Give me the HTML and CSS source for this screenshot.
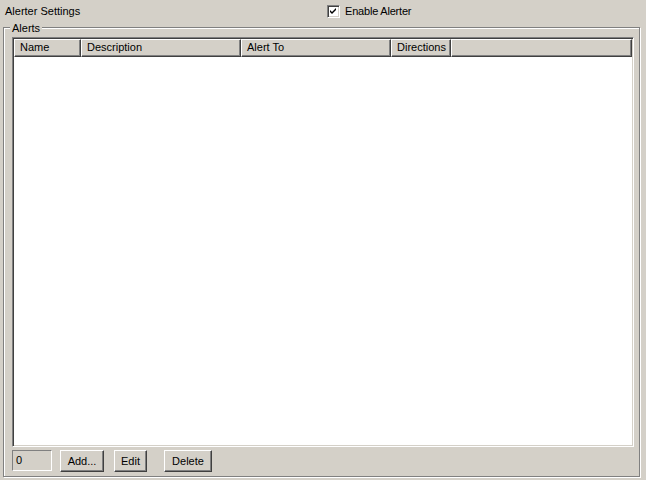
FILE: index.html
```html
<!DOCTYPE html>
<html lang="en">
<head>
    <meta charset="UTF-8">
    <title>Alerter Settings</title>
    <link rel="stylesheet" href="styles.css">
</head>
<body>
    <!-- Top bar -->
    <div class="top-bar">
        <span class="page-title">Alerter Settings</span>
        <label class="check">
            <span class="check-box">
                <svg width="9" height="9" viewBox="0 0 9 9">
                    <path d="M1 3 L3 5 L7 1 L7 3 L3 7 L1 5 Z" fill="#000"/>
                </svg>
            </span>
            Enable Alerter
        </label>
    </div>

    <!-- Alerts group -->
    <div class="group">
        <span class="legend">Alerts</span>

        <div class="list-view">
            <div class="list-header">
                <div class="col col-name">Name</div>
                <div class="col col-desc">Description</div>
                <div class="col col-to">Alert To</div>
                <div class="col col-dir">Directions</div>
                <div class="col col-rest"></div>
            </div>
            <div class="list-body"></div>
        </div>

        <div class="actions">
            <div class="count-box">0</div>
            <button class="btn btn-add">Add...</button>
            <button class="btn btn-edit">Edit</button>
            <button class="btn btn-delete">Delete</button>
        </div>
    </div>
</body>
</html>
```

FILE: styles.css
```css
/* Reset */
* {
    margin: 0;
    padding: 0;
    box-sizing: border-box;
}

body {
    font-family: 'Liberation Sans', Arial, sans-serif;
    font-size: 11px;
    background-color: #d4d0c8;
    color: #000;
    width: 646px;
    height: 480px;
    overflow: hidden;
}

/* Top bar */
.top-bar {
    display: flex;
    align-items: center;
    height: 22px;
}

.page-title {
    flex: 0 0 327px;
    padding-left: 5px;
}

.check {
    display: flex;
    align-items: center;
    gap: 5px;
    letter-spacing: -0.2px;
}

.check-box {
    display: flex;
    align-items: center;
    justify-content: center;
    width: 13px;
    height: 13px;
    background: #fff;
    border: 1px solid;
    border-color: #808080 #fff #fff #808080;
    box-shadow: inset 1px 1px 0 #404040, inset -1px -1px 0 #d4d0c8;
}

/* Group box */
.group {
    position: relative;
    margin: 5px 0 0 3px;
    width: 637px;
    height: 450px;
    border: 1px solid #808080;
    box-shadow: inset 1px 1px 0 #fff, 1px 1px 0 #fff;
    padding: 9px 5px 0 8px;
    display: flex;
    flex-direction: column;
}

.legend {
    position: absolute;
    top: -6px;
    left: 6px;
    padding: 0 2px;
    background: #d4d0c8;
    line-height: 13px;
}

/* List view */
.list-view {
    width: 622px;
    height: 410px;
    background: #fff;
    border: 1px solid;
    border-color: #808080 #fff #fff #808080;
    box-shadow: inset 1px 1px 0 #404040, inset -1px -1px 0 #d4d0c8;
    padding: 1px;
    display: flex;
    flex-direction: column;
}

.list-header {
    display: flex;
    height: 18px;
    flex: 0 0 18px;
}

.col {
    background: #d4d0c8;
    border: 1px solid;
    border-color: #fff #404040 #404040 #fff;
    box-shadow: inset -1px -1px 0 #808080;
    padding-left: 5px;
    line-height: 15px;
    white-space: nowrap;
}

.col-name { width: 67px; }
.col-desc { width: 160px; }
.col-to { width: 150px; }
.col-dir { width: 60px; }
.col-rest { flex: 1; }

.list-body {
    flex: 1;
}

/* Bottom actions */
.actions {
    display: flex;
    align-items: flex-start;
    margin-top: 3px;
}

.count-box {
    width: 40px;
    height: 21px;
    border: 1px solid;
    border-color: #808080 #fff #fff #808080;
    padding: 2px 0 0 3px;
    line-height: 14px;
}

.btn {
    height: 22px;
    font-family: inherit;
    font-size: 11px;
    background: #d4d0c8;
    color: #000;
    border: 1px solid;
    border-color: #fff #404040 #404040 #fff;
    box-shadow: inset -1px -1px 0 #808080;
}

.btn-add { width: 44px; margin-left: 8px; }
.btn-edit { width: 33px; margin-left: 10px; }
.btn-delete { width: 48px; margin-left: 17px; }
```
